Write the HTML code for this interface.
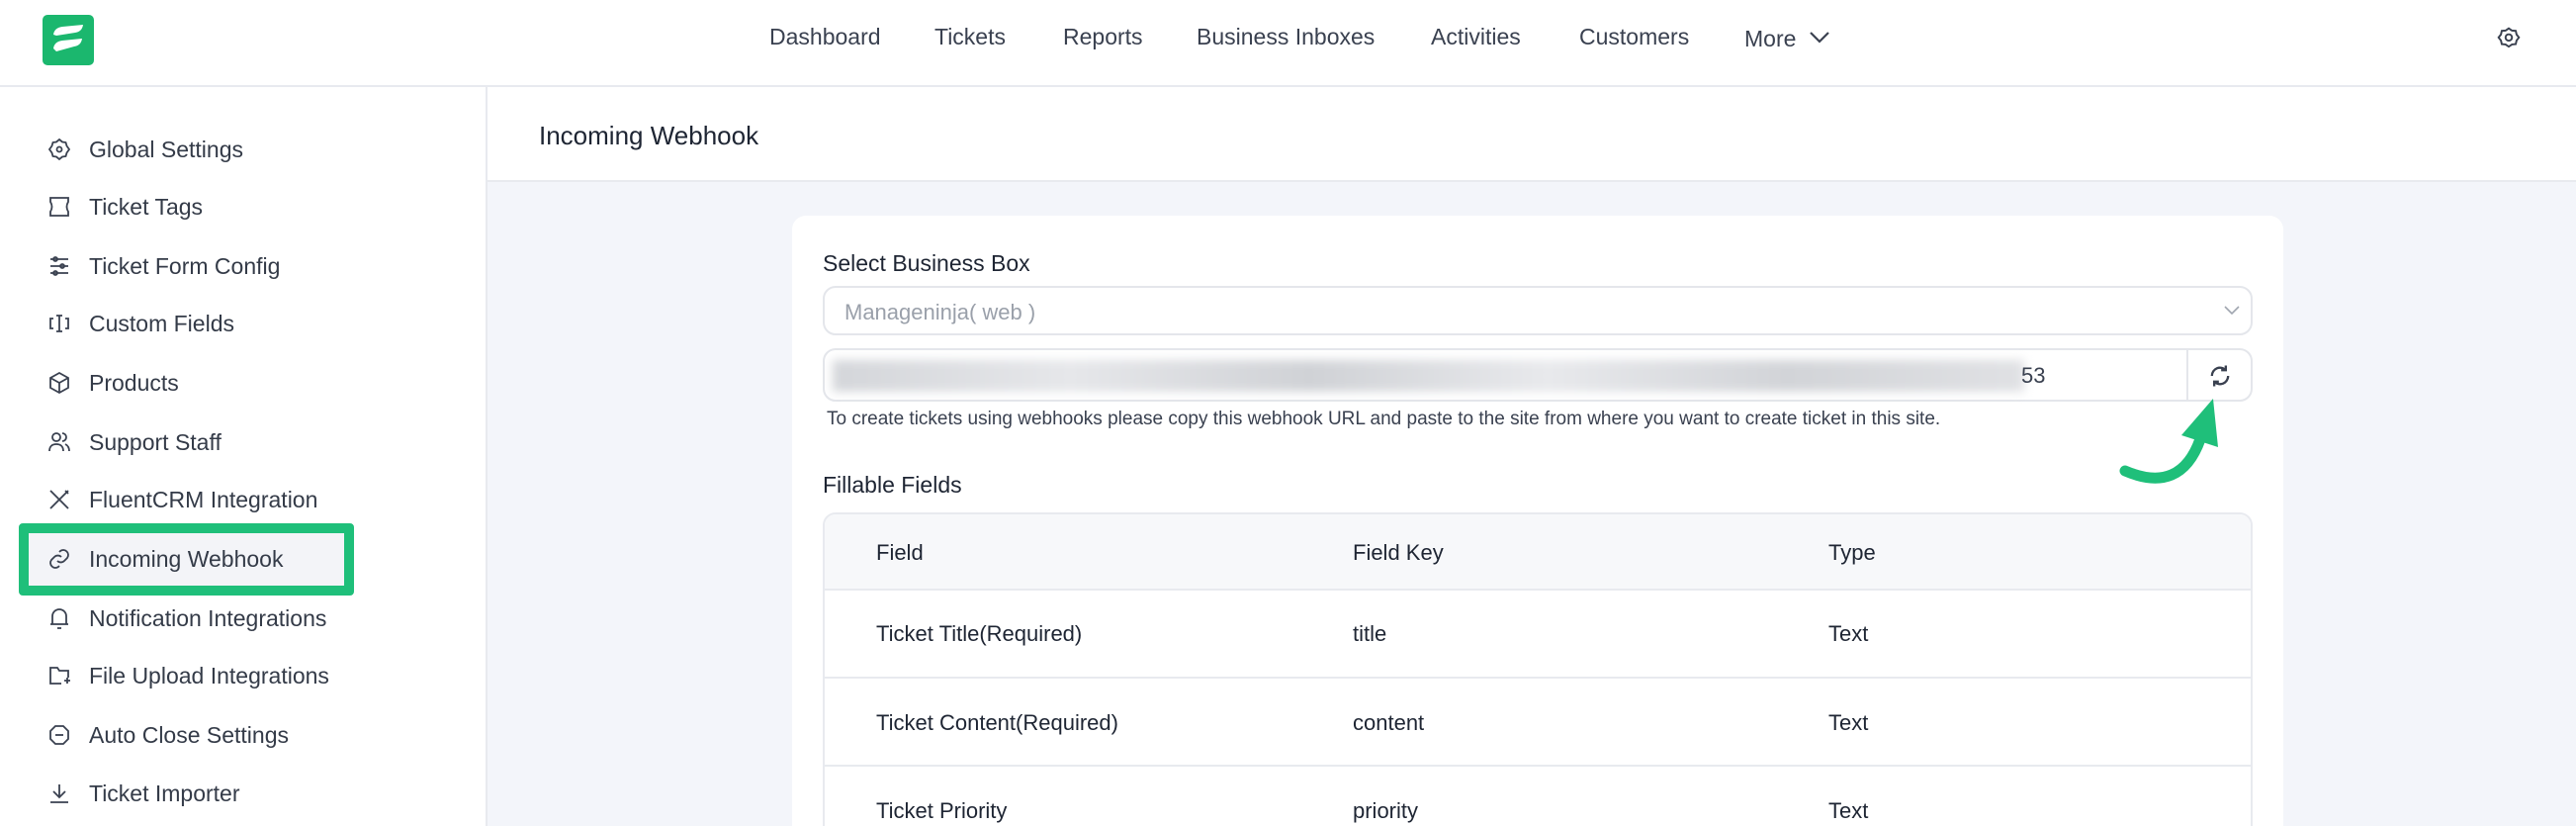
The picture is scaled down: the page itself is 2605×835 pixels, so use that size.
<!DOCTYPE html>
<html><head><meta charset="utf-8"><style>
*{box-sizing:border-box;margin:0;padding:0}
html,body{width:2605px;height:835px;overflow:hidden}
body{background:#fff;font-family:"Liberation Sans",sans-serif;color:#1e2533}
#w{position:relative;width:2605px;height:835px;overflow:hidden}
.hdr{position:absolute;left:0;top:0;width:2605px;height:88px;border-bottom:2px solid #e8eaef;background:#fff}
.logo{position:absolute;left:43px;top:15px;width:52px;height:51px;background:#1bb76e;border-radius:5px}
.nav{position:absolute;top:24px;font-size:23px;color:#3a4150;white-space:nowrap}
.side{position:absolute;left:0;top:88px;width:493px;height:747px;border-right:2px solid #e8eaef;background:#fff}
.si{position:absolute;left:48px;height:30px;font-size:23px;color:#343b48;display:flex;align-items:center;white-space:nowrap}
.si svg{width:24px;height:24px;margin-right:18px;fill:none;stroke:#3a4150;stroke-width:1.8}
.hl{position:absolute;left:19px;top:441px;width:339px;height:73px;border:10px solid #1fbf7a;border-radius:4px;background:#f3f4f8}
.title{position:absolute;left:493px;top:88px;width:2112px;height:96px;border-bottom:2px solid #e8eaef;background:#fff}
.title span{position:absolute;left:52px;top:34px;font-size:26px;color:#1e2533}
.bg{position:absolute;left:493px;top:184px;width:2112px;height:651px;background:#f3f5fa}
.card{position:absolute;left:801px;top:218px;width:1508px;height:617px;background:#fff;border-radius:14px 14px 0 0}
.lbl{position:absolute;font-size:23px;color:#1e2533}
.box{position:absolute;left:832px;width:1446px;border:2px solid #e4e6eb;border-radius:13px;background:#fff}
.tbl{position:absolute;left:832px;top:518px;width:1446px;height:340px;border:2px solid #e8eaef;border-radius:13px;overflow:hidden}
.row{position:absolute;left:0;width:100%;border-bottom:2px solid #e8eaef}
.cell{position:absolute;font-size:22px;color:#1e2533}
</style></head><body><div id="w">
<div class="hdr">
<div class="logo"><svg width="52" height="51" viewBox="0 0 52 51"><path d="M11 20 Q12 13 20 12 L41 10 Q40 17 33 18 L14 21Z" fill="#fff"/><path d="M11 34 Q12 27 20 26 L40 24 Q39 31 32 32 L14 37Z" fill="#fff"/></svg></div>
<div class="nav" style="left:778px">Dashboard</div>
<div class="nav" style="left:945px">Tickets</div>
<div class="nav" style="left:1075px">Reports</div>
<div class="nav" style="left:1210px">Business Inboxes</div>
<div class="nav" style="left:1447px">Activities</div>
<div class="nav" style="left:1597px">Customers</div>
<div class="nav" style="left:1764px;top:26px">More</div>
<svg style="position:absolute;left:1829px;top:30px" width="22" height="16" viewBox="0 0 22 16"><path d="M2 3 L11 12 L20 3" fill="none" stroke="#3a4150" stroke-width="2.2"/></svg>
<svg style="position:absolute;left:2524px;top:26px" width="26" height="26" viewBox="0 0 24 24" fill="none" stroke="#3a4150" stroke-width="1.8"><path d="M12 2.5l3 2 3.5.3.8 3.4 2.2 2.8-2.2 2.8-.8 3.4-3.5.3-3 2-3-2-3.5-.3-.8-3.4L2.5 11l2.2-2.8.8-3.4 3.5-.3z"/><circle cx="12" cy="11" r="3"/></svg>
</div>
<div class="side">
<div class="hl"></div>
<div class="si" style="top:48px"><svg viewBox="0 0 24 24"><path d="M12 2l3 2.5 3.5.5 1 3.5L22 12l-2.5 3.5-1 3.5-3.5.5L12 22l-3-2.5-3.5-.5-1-3.5L2 12l2.5-3.5 1-3.5 3.5-.5z"/><circle cx="12" cy="12" r="2.5"/></svg>Global Settings</div>
<div class="si" style="top:106px"><svg viewBox="0 0 24 24"><path d="M3 3h18v4q-3 5 0 10v4H3v-4q3-5 0-10z"/></svg>Ticket Tags</div>
<div class="si" style="top:166px"><svg viewBox="0 0 24 24"><path d="M3 5h18M3 12h18M3 19h18"/><circle cx="8" cy="5" r="2"/><circle cx="15" cy="12" r="2"/><circle cx="8" cy="19" r="2"/></svg>Ticket Form Config</div>
<div class="si" style="top:224px"><svg viewBox="0 0 24 24"><path d="M6 7H3v10h3M18 7h3v10h-3M12 4v16M9 4h6M9 20h6"/></svg>Custom Fields</div>
<div class="si" style="top:284px"><svg viewBox="0 0 24 24"><path d="M12 2l9 5v10l-9 5-9-5V7zM3 7l9 5 9-5M12 12v10"/></svg>Products</div>
<div class="si" style="top:344px"><svg viewBox="0 0 24 24"><circle cx="9" cy="7" r="4"/><path d="M2 21c0-5 3-7 7-7s7 2 7 7M15 3a4 4 0 010 8M18 14c2 1 4 3 4 7"/></svg>Support Staff</div>
<div class="si" style="top:402px"><svg viewBox="0 0 24 24"><path d="M3 3l18 18M21 3L3 21M18 3l3 3"/></svg>FluentCRM Integration</div>
<div class="si" style="top:462px"><svg viewBox="0 0 24 24"><path d="M10 14a5 5 0 007 0l3-3a5 5 0 00-7-7l-1 1M14 10a5 5 0 00-7 0l-3 3a5 5 0 007 7l1-1"/></svg>Incoming Webhook</div>
<div class="si" style="top:522px"><svg viewBox="0 0 24 24"><path d="M5 18V10a7 7 0 0114 0v8M3 18h18M10 22h4"/></svg>Notification Integrations</div>
<div class="si" style="top:580px"><svg viewBox="0 0 24 24"><path d="M14 20H3V4h7l2 3h9v7M17 17h6M20 14v6"/></svg>File Upload Integrations</div>
<div class="si" style="top:640px"><svg viewBox="0 0 24 24"><path d="M8 3h8l5 5v8l-5 5H8l-5-5V8z"/><path d="M8 12h8"/></svg>Auto Close Settings</div>
<div class="si" style="top:699px"><svg viewBox="0 0 24 24"><path d="M12 3v13M6 10l6 6 6-6M3 21h18"/></svg>Ticket Importer</div>
</div>
<div class="title"><span>Incoming Webhook</span></div>
<div class="bg"></div>
<div class="card"></div>
<div class="lbl" style="left:832px;top:253px">Select Business Box</div>
<div class="box" style="top:289px;height:50px"><span style="position:absolute;left:20px;top:12px;font-size:22px;color:#9aa0aa">Manageninja( web )</span>
<svg style="position:absolute;right:10px;top:17px" width="18" height="12" viewBox="0 0 18 12"><path d="M2 2l7 7 7-7" fill="none" stroke="#a0a6b0" stroke-width="1.6"/></svg></div>
<div class="box" style="top:352px;height:54px">
<div style="position:absolute;left:8px;top:10px;width:1205px;height:32px;background:linear-gradient(90deg,#d4d6da,#e6e7ea 20%,#d0d2d6 40%,#e8e9ec 60%,#d2d4d8 80%,#e0e1e4);filter:blur(5px)"></div>
<span style="position:absolute;left:1210px;top:13px;font-size:22px;color:#3a4150">53</span>
<div style="position:absolute;left:1377px;top:0;width:2px;height:50px;background:#e4e6eb"></div>
<svg style="position:absolute;left:1397px;top:12px" width="28" height="28" viewBox="0 0 24 24" fill="none" stroke="#3a4150" stroke-width="2"><path d="M19 12a7 7 0 01-12 5M5 12a7 7 0 0112-5"/><path d="M17 3v4h-4M7 21v-4h4"/></svg>
</div>
<div class="lbl" style="left:836px;top:413px;font-size:19px;color:#3a4150">To create tickets using webhooks please copy this webhook URL and paste to the site from where you want to create ticket in this site.</div>
<div class="lbl" style="left:832px;top:477px">Fillable Fields</div>
<div class="tbl">
<div class="row" style="top:0;height:77px;background:#f7f8fa"></div>
<div class="row" style="top:77px;height:89px"></div>
<div class="row" style="top:166px;height:89px"></div>
<div class="cell" style="left:52px;top:26px">Field</div><div class="cell" style="left:534px;top:26px">Field Key</div><div class="cell" style="left:1015px;top:26px">Type</div>
<div class="cell" style="left:52px;top:108px">Ticket Title(Required)</div><div class="cell" style="left:534px;top:108px">title</div><div class="cell" style="left:1015px;top:108px">Text</div>
<div class="cell" style="left:52px;top:198px">Ticket Content(Required)</div><div class="cell" style="left:534px;top:198px">content</div><div class="cell" style="left:1015px;top:198px">Text</div>
<div class="cell" style="left:52px;top:287px">Ticket Priority</div><div class="cell" style="left:534px;top:287px">priority</div><div class="cell" style="left:1015px;top:287px">Text</div>
</div>
<svg style="position:absolute;left:0;top:0" width="2605" height="835"><path d="M2149 476 Q2205 500 2225 444" fill="none" stroke="#1fbf7a" stroke-width="11" stroke-linecap="round"/><path d="M2238 403 L2206 440 L2243 452Z" fill="#1fbf7a"/></svg>
</div></body></html>
